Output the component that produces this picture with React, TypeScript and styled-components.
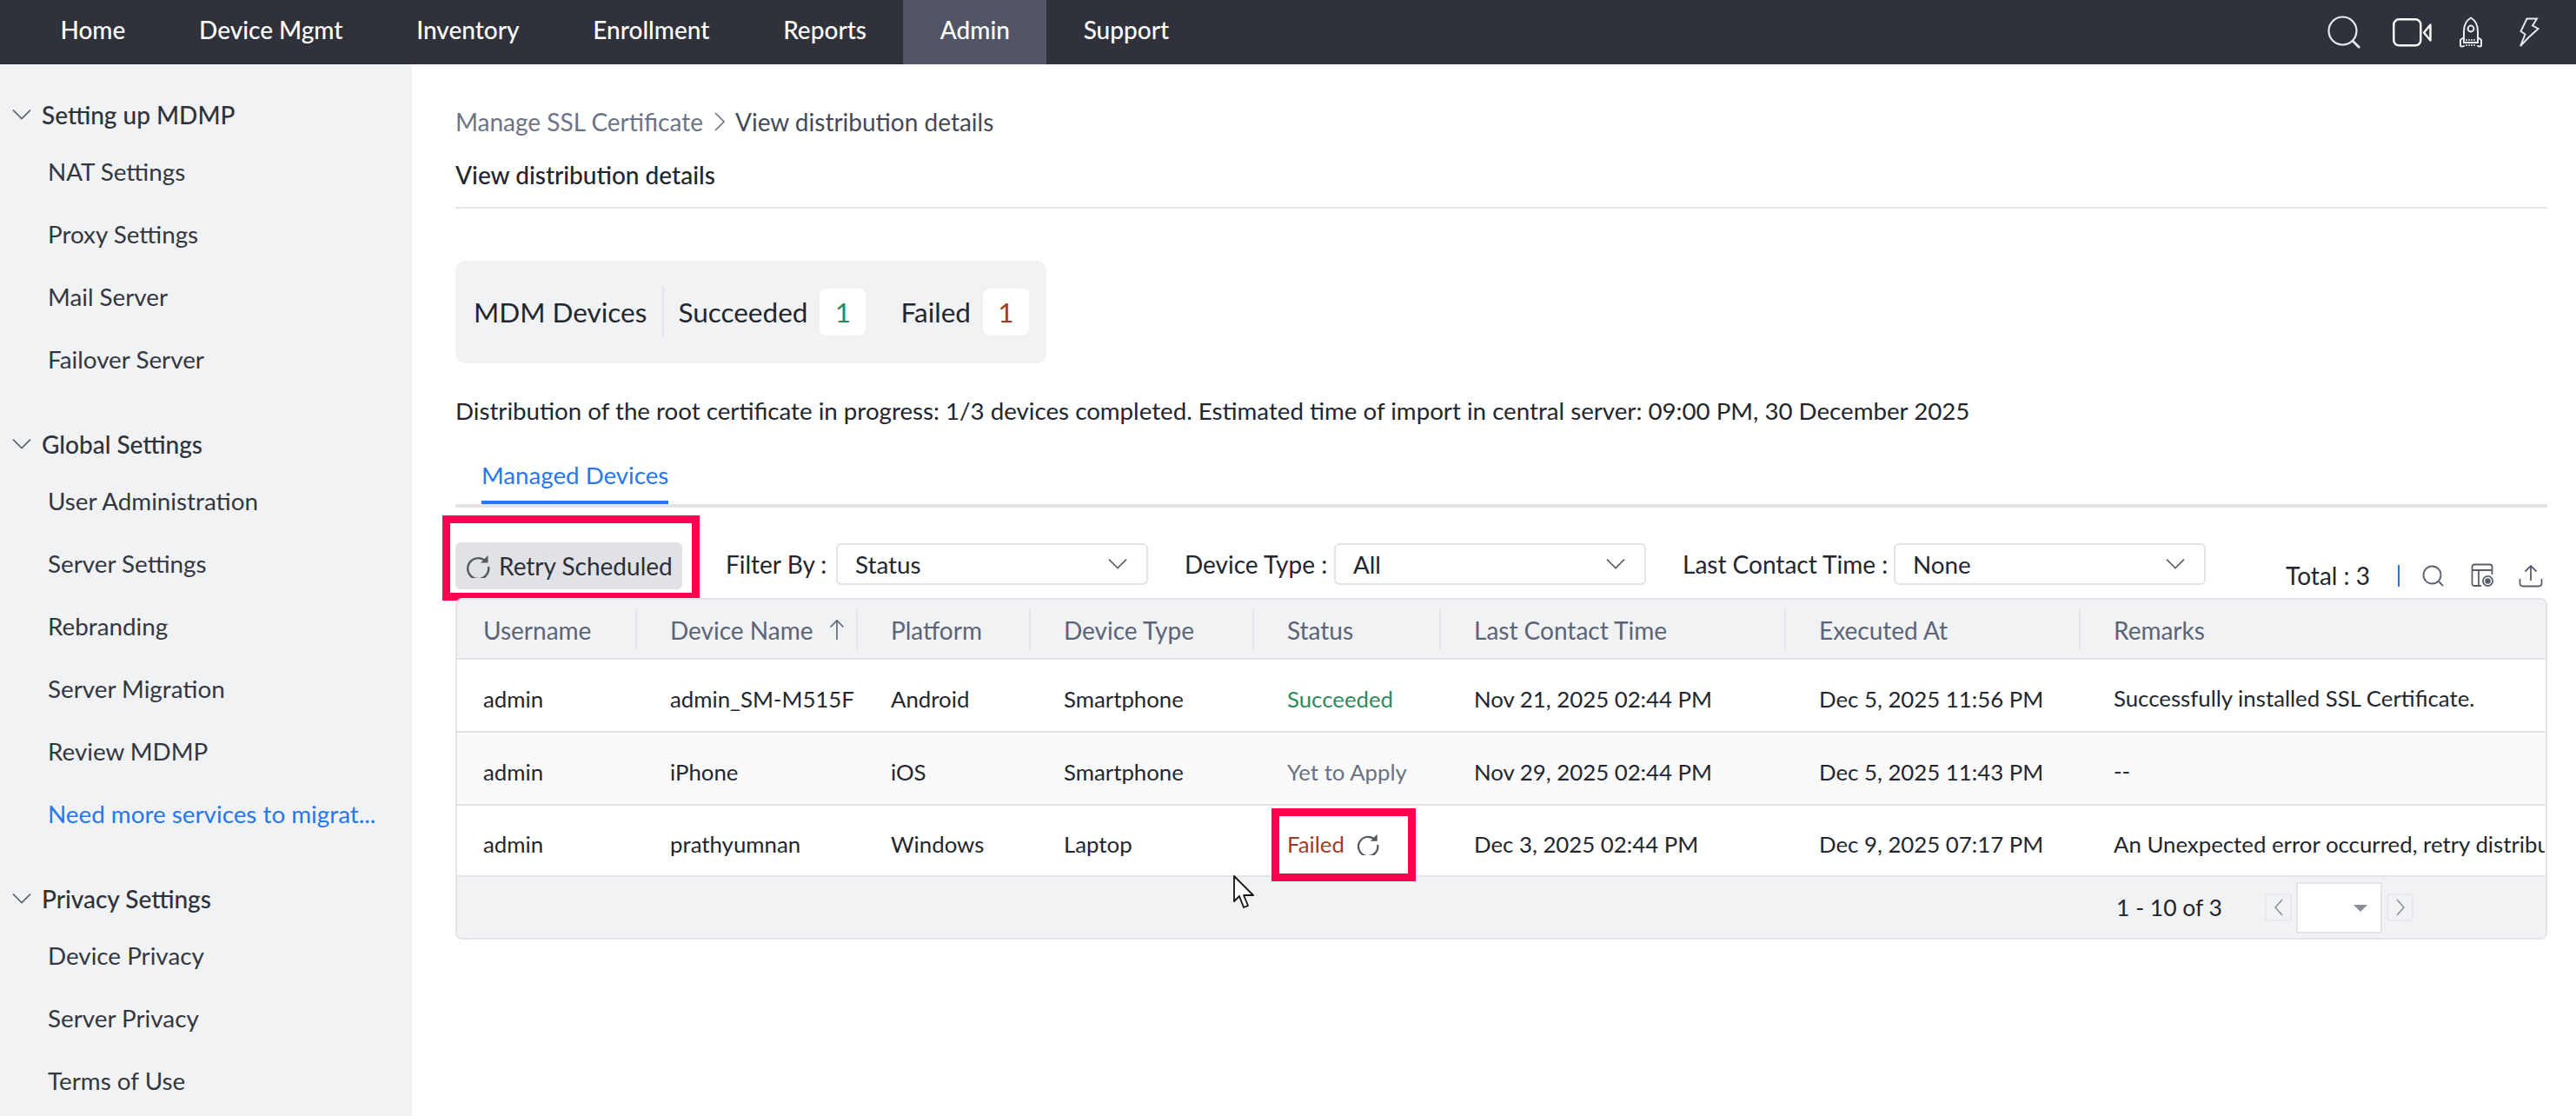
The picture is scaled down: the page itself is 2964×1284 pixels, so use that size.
import React from "react";
import styled, { createGlobalStyle } from "styled-components";

const Global = createGlobalStyle`
  html, body { margin: 0; padding: 0; background: #fff; }
  body { font-family: Lato, "Noto Sans", sans-serif; color: #24262e; }
  * { box-sizing: border-box; }
`;

const Page = styled.div`
  width: 2964px;
  height: 1284px;
  display: flex;
  flex-direction: column;
  overflow: hidden;
`;

const TopBar = styled.header`
  height: 74px;
  flex: none;
  background: #2f323a;
  display: flex;
  align-items: stretch;
  padding-left: 27px;
`;

const NavItem = styled.div<{ $active?: boolean }>`
  display: flex;
  align-items: center;
  padding: 0 42.4px 6px;
  color: #fff;
  font-size: 28px;
  font-weight: 500;
  background: ${(p) => (p.$active ? "#525566" : "transparent")};
`;

const NavIcons = styled.div`
  margin-left: auto;
  display: flex;
  align-items: center;
  padding-right: 42px;
  color: #fff;
  svg { display: block; }
`;

const NavIconSlot = styled.div<{ $w: number; $after: number }>`
  width: ${(p) => p.$w}px;
  margin-right: ${(p) => p.$after}px;
  display: flex;
  justify-content: center;
`;

const Body = styled.div`
  flex: 1;
  display: flex;
  min-height: 0;
`;

const Sidebar = styled.aside`
  width: 474px;
  flex: none;
  background: #f1f2f4;
  padding-top: 29px;
`;

const Group = styled.div`
  margin-bottom: 33px;
`;

const GroupHead = styled.div`
  height: 58px;
  display: flex;
  align-items: center;
  padding-left: 14px;
  gap: 12px;
  font-size: 28px;
  font-weight: 500;
  color: #2f323a;
`;

const SideItem = styled.div<{ $link?: boolean }>`
  height: 72px;
  display: flex;
  align-items: center;
  padding-left: 55px;
  font-size: 27.8px;
  color: ${(p) => (p.$link ? "#2777f0" : "#34373f")};
`;

const Main = styled.main`
  flex: 1;
  min-width: 0;
  padding: 46px 33px 0 50px;
`;

const Crumbs = styled.div`
  height: 40px;
  display: flex;
  align-items: center;
  gap: 12px;
  font-size: 28px;
`;

const CrumbLink = styled.span`
  color: #6c7486;
`;

const CrumbNow = styled.span`
  color: #444a57;
`;

const PageTitle = styled.div`
  margin-top: 22px;
  height: 58px;
  padding-bottom: 16px;
  line-height: 38px;
  border-bottom: 2px solid #e3e4e8;
  font-size: 28px;
  font-weight: 500;
  color: #24262e;
`;

const StatsCard = styled.div`
  margin-top: 60px;
  width: 680px;
  height: 118px;
  border-radius: 12px;
  background: #f1f2f4;
  display: flex;
  align-items: center;
  padding-left: 21px;
  font-size: 31.5px;
  color: #24262e;
`;

const StatsTitle = styled.div`
  padding-right: 18px;
  height: 58px;
  display: flex;
  align-items: center;
  border-right: 2px solid #e3e4e8;
  margin-right: 16px;
`;

const StatLabel = styled.div`
  margin-right: 14px;
`;

const StatCount = styled.div<{ $color: string; $after?: number }>`
  width: 53px;
  height: 54px;
  border-radius: 8px;
  background: #fff;
  display: flex;
  align-items: center;
  justify-content: center;
  color: ${(p) => p.$color};
  margin-right: ${(p) => p.$after || 0}px;
`;

const InfoLine = styled.div`
  margin-top: 35px;
  line-height: 40px;
  font-size: 27.7px;
  color: #24262e;
  white-space: nowrap;
`;

const TabBar = styled.div`
  margin-top: 27px;
  padding-left: 30px;
  border-bottom: 4px solid #e3e4e8;
  height: 64px;
`;

const Tab = styled.div`
  display: inline-block;
  height: 60px;
  padding-top: 7px;
  line-height: 40px;
  font-size: 27.7px;
  color: #2777f0;
  border-bottom: 4px solid #2777f0;
`;

const Toolbar = styled.div`
  margin-top: 40px;
  margin-bottom: 10px;
  height: 54px;
  display: flex;
  align-items: flex-start;
`;

const RetryWrap = styled.div`
  position: relative;
  margin-right: 50px;
`;

const RetryButton = styled.div`
  width: 261px;
  height: 54px;
  border-radius: 6px;
  background: #e1e2e6;
  display: flex;
  align-items: center;
  padding-left: 12px;
  gap: 10px;
  font-size: 28px;
  color: #2b2f3a;
  white-space: nowrap;
`;

const RedBox = styled.div<{ $t: number; $l: number; $w: number; $h: number }>`
  position: absolute;
  top: ${(p) => p.$t}px;
  left: ${(p) => p.$l}px;
  width: ${(p) => p.$w}px;
  height: ${(p) => p.$h}px;
  border: 9px solid #ff0050;
  pointer-events: none;
`;

const Filter = styled.div`
  display: flex;
  align-items: center;
  height: 48px;
  margin-top: 1px;
  margin-right: 42px;
  &:last-of-type { margin-right: 0; }
`;

const FilterLabel = styled.div<{ $w: number }>`
  width: ${(p) => p.$w}px;
  font-size: 28px;
  color: #24262e;
  white-space: nowrap;
`;

const Select = styled.div`
  width: 359px;
  height: 48px;
  border: 2px solid #e3e4e8;
  border-radius: 6px;
  background: #fff;
  display: flex;
  align-items: center;
  justify-content: space-between;
  padding: 0 22px 0 20px;
  font-size: 27.8px;
  color: #24262e;
`;

const Totals = styled.div`
  margin-left: auto;
  margin-top: 23px;
  margin-right: 5px;
  height: 30px;
  display: flex;
  align-items: center;
  font-size: 28px;
  color: #24262e;
`;

const Divider = styled.div`
  width: 2px;
  height: 25px;
  background: #2777f0;
  margin: 0 26px 0 32px;
`;

const ToolIcon = styled.div<{ $after?: number }>`
  margin-right: ${(p) => p.$after || 0}px;
  color: #5a5f6b;
  display: flex;
  svg { display: block; }
`;

const TableFrame = styled.div`
  position: relative;
  border: 2px solid #e3e4e8;
  border-radius: 8px;
  height: 393px;
  background: #fff;
`;

const COLUMNS = "207px 254px 199px 257px 215px 397px 339px 534px";

const HeadRow = styled.div`
  display: grid;
  grid-template-columns: ${COLUMNS};
  height: 69px;
  align-items: center;
  background: #f1f2f4;
  border-bottom: 2px solid #e3e4e8;
  border-radius: 6px 6px 0 0;
`;

const HeadCell = styled.div<{ $first?: boolean; $last?: boolean }>`
  height: 46px;
  display: flex;
  align-items: center;
  gap: 18px;
  padding-top: 2px;
  padding-left: ${(p) => (p.$first ? 30 : 38)}px;
  border-right: ${(p) => (p.$last ? "none" : "2px solid #e3e4e8")};
  font-size: 28px;
  color: #5c6477;
  white-space: nowrap;
`;

const Row = styled.div<{ $h: number; $alt?: boolean }>`
  display: grid;
  grid-template-columns: ${COLUMNS};
  height: ${(p) => p.$h}px;
  align-items: center;
  background: ${(p) => (p.$alt ? "#fafafa" : "#fff")};
  border-bottom: 2px solid #e3e4e8;
`;

const Cell = styled.div<{ $first?: boolean; $color?: string }>`
  position: relative;
  padding-left: ${(p) => (p.$first ? 30 : 38)}px;
  padding-top: 7px;
  height: 100%;
  display: flex;
  align-items: center;
  gap: 14px;
  font-size: 25.8px;
  color: ${(p) => p.$color || "#24262e"};
  white-space: nowrap;
`;

const RemarkCell = styled(Cell)`
  display: block;
  padding-top: 0;
  line-height: 88px;
  overflow: hidden;
`;

const Footer = styled.div`
  height: 70px;
  background: #f1f2f4;
  border-radius: 0 0 6px 6px;
  display: flex;
  align-items: center;
  justify-content: flex-end;
  padding-right: 152px;
  font-size: 26.5px;
  color: #24262e;
`;

const PageRange = styled.div`
  margin-right: 49px;
`;

const PageBtn = styled.div`
  width: 31px;
  height: 32px;
  border: 2px solid #e8e9ec;
  border-radius: 4px;
  display: flex;
  align-items: center;
  justify-content: center;
  color: #8d919b;
`;

const PageSelect = styled.div`
  width: 99px;
  height: 59px;
  margin: 0 5px;
  background: #fff;
  border: 2px solid #e3e4e8;
  position: relative;
`;

const Caret = styled.div`
  position: absolute;
  right: 15px;
  top: 24px;
  width: 0;
  height: 0;
  border-left: 8px solid transparent;
  border-right: 8px solid transparent;
  border-top: 8px solid #8a8d95;
`;

const Pointer = styled.svg`
  position: absolute;
  left: 892px;
  top: 317px;
  pointer-events: none;
`;

const Chevron = ({ size = 22, color = "#5a5f6b" }: { size?: number; color?: string }) => (
  <svg width={size} height={size * 0.6} viewBox="0 0 22 13" fill="none" stroke={color} strokeWidth="1.6">
    <path d="M1 1.5 L11 11.5 L21 1.5" />
  </svg>
);

const Refresh = ({ size = 28, color = "#55585f" }: { size?: number; color?: string }) => (
  <svg width={size} height={size} viewBox="0 0 28 28" fill="none">
    <path d="M22.5 8.5 A12 12 0 1 0 26 15" stroke={color} strokeWidth="2.4" />
    <path d="M25.5 2 V10.5 H17 Z" fill={color} />
  </svg>
);

const SearchLarge = () => (
  <svg width="38" height="38" viewBox="0 0 38 38" fill="none" stroke="#e9eaee" strokeWidth="2.2">
    <circle cx="17.5" cy="17.5" r="16" />
    <path d="M29 29 L37 37" strokeWidth="2.6" />
  </svg>
);

const Video = () => (
  <svg width="45" height="33" viewBox="0 0 45 33" fill="none" stroke="#fff" strokeWidth="2.4" strokeLinejoin="round">
    <rect x="1.3" y="1.3" width="31" height="30" rx="6" />
    <path d="M36 16.5 L43.5 7.5 V25.5 Z" />
  </svg>
);

const Rocket = () => (
  <svg width="28" height="36" viewBox="0 0 28 36" fill="none" stroke="#e9eaee" strokeWidth="2">
    <path d="M14 1.5 C8 5 6 11 6 17 V30 H22 V17 C22 11 20 5 14 1.5 Z" />
    <circle cx="14" cy="14" r="3.4" />
    <path d="M6 24 L2 27 V33 C2 35 6 35 6 33 M22 24 L26 27 V33 C26 35 22 35 22 33" />
    <path d="M8 27 H20 M8 30 H20 M8 33 H20" strokeWidth="1.6" strokeDasharray="2 1" />
  </svg>
);

const Bolt = () => (
  <svg width="23" height="34" viewBox="0 0 23 34" fill="none" stroke="#e9eaee" strokeWidth="1.9" strokeLinejoin="miter">
    <path d="M8.5 1.5 H20 L15 9.5 L21.5 13 L10 23.5 L1 33 L6.5 19.5 L1.5 16 Z" />
  </svg>
);

const SearchSmall = () => (
  <svg width="25" height="25" viewBox="0 0 25 25" fill="none" stroke="currentColor" strokeWidth="1.8">
    <circle cx="11.5" cy="11.5" r="10" />
    <path d="M19 19 L24 24" />
  </svg>
);

const ColumnsIcon = () => (
  <svg width="27" height="28" viewBox="0 0 27 28" fill="none" stroke="currentColor" strokeWidth="1.8">
    <path d="M12 26 H4 C2.5 26 1.5 25 1.5 23.5 V4 C1.5 2.5 2.5 1.5 4 1.5 H22 C23.5 1.5 24.5 2.5 24.5 4 V13" />
    <path d="M1.5 8 H24.5 M9 8 V26" />
    <circle cx="19.5" cy="20.5" r="5.6" />
    <circle cx="19.5" cy="20.5" r="2.4" fill="currentColor" />
  </svg>
);

const UploadIcon = () => (
  <svg width="28" height="27" viewBox="0 0 28 27" fill="none" stroke="currentColor" strokeWidth="1.8">
    <path d="M14 19 V2 M7.5 8.5 L14 2 L20.5 8.5" />
    <path d="M1.5 17 V22 C1.5 24 3 25.5 5 25.5 H23 C25 25.5 26.5 24 26.5 22 V17" />
  </svg>
);

const SortUp = () => (
  <svg width="18" height="25" viewBox="0 0 18 25" fill="none" stroke="#5c6477" strokeWidth="1.6">
    <path d="M9 24 V2 M1.5 9.5 L9 2 L16.5 9.5" />
  </svg>
);

const menu: { head: string; items: { label: string; link?: boolean }[] }[] = [
  { head: "Setting up MDMP", items: [{ label: "NAT Settings" }, { label: "Proxy Settings" }, { label: "Mail Server" }, { label: "Failover Server" }] },
  {
    head: "Global Settings",
    items: [
      { label: "User Administration" },
      { label: "Server Settings" },
      { label: "Rebranding" },
      { label: "Server Migration" },
      { label: "Review MDMP" },
      { label: "Need more services to migrat...", link: true },
    ],
  },
  { head: "Privacy Settings", items: [{ label: "Device Privacy" }, { label: "Server Privacy" }, { label: "Terms of Use" }] },
];

const tabs = ["Home", "Device Mgmt", "Inventory", "Enrollment", "Reports", "Admin", "Support"];
const headers = ["Username", "Device Name", "Platform", "Device Type", "Status", "Last Contact Time", "Executed At", "Remarks"];

export default function App() {
  return (
    <Page>
      <Global />
      <TopBar>
        {tabs.map((t) => (
          <NavItem key={t} $active={t === "Admin"}>{t}</NavItem>
        ))}
        <NavIcons>
          <NavIconSlot $w={38} $after={37}><SearchLarge /></NavIconSlot>
          <NavIconSlot $w={45} $after={31}><Video /></NavIconSlot>
          <NavIconSlot $w={28} $after={42}><Rocket /></NavIconSlot>
          <NavIconSlot $w={23} $after={0}><Bolt /></NavIconSlot>
        </NavIcons>
      </TopBar>
      <Body>
        <Sidebar>
          {menu.map((g) => (
            <Group key={g.head}>
              <GroupHead>
                <Chevron />
                {g.head}
              </GroupHead>
              {g.items.map((i) => (
                <SideItem key={i.label} $link={i.link}>{i.label}</SideItem>
              ))}
            </Group>
          ))}
        </Sidebar>
        <Main>
          <Crumbs>
            <CrumbLink>Manage SSL Certificate</CrumbLink>
            <svg width="13" height="22" viewBox="0 0 13 22" fill="none" stroke="#6c7486" strokeWidth="1.6">
              <path d="M2 1 L12 11 L2 21" />
            </svg>
            <CrumbNow>View distribution details</CrumbNow>
          </Crumbs>
          <PageTitle>View distribution details</PageTitle>
          <StatsCard>
            <StatsTitle>MDM Devices</StatsTitle>
            <StatLabel>Succeeded</StatLabel>
            <StatCount $color="#2d8a5b" $after={40}>1</StatCount>
            <StatLabel>Failed</StatLabel>
            <StatCount $color="#a33a1f">1</StatCount>
          </StatsCard>
          <InfoLine>
            Distribution of the root certificate in progress: 1/3 devices completed. Estimated time of import in central server: 09:00 PM, 30 December 2025
          </InfoLine>
          <TabBar>
            <Tab>Managed Devices</Tab>
          </TabBar>
          <Toolbar>
            <RetryWrap>
              <RetryButton>
                <Refresh />
                Retry Scheduled
              </RetryButton>
              <RedBox $t={-31} $l={-15} $w={296} $h={98} />
            </RetryWrap>
            <Filter>
              <FilterLabel $w={127}>Filter By :</FilterLabel>
              <Select>Status<Chevron /></Select>
            </Filter>
            <Filter>
              <FilterLabel $w={172}>Device Type :</FilterLabel>
              <Select>All<Chevron /></Select>
            </Filter>
            <Filter>
              <FilterLabel $w={243}>Last Contact Time :</FilterLabel>
              <Select>None<Chevron /></Select>
            </Filter>
            <Totals>
              Total : 3
              <Divider />
              <ToolIcon $after={31}><SearchSmall /></ToolIcon>
              <ToolIcon $after={28}><ColumnsIcon /></ToolIcon>
              <ToolIcon><UploadIcon /></ToolIcon>
            </Totals>
          </Toolbar>
          <TableFrame>
            <HeadRow>
              {headers.map((h, i) => (
                <HeadCell key={h} $first={i === 0} $last={i === headers.length - 1}>
                  {h}
                  {h === "Device Name" && <SortUp />}
                </HeadCell>
              ))}
            </HeadRow>
            <Row $h={84}>
              <Cell $first>admin</Cell>
              <Cell>admin_SM-M515F</Cell>
              <Cell>Android</Cell>
              <Cell>Smartphone</Cell>
              <Cell $color="#2d8a5b">Succeeded</Cell>
              <Cell>Nov 21, 2025 02:44 PM</Cell>
              <Cell>Dec 5, 2025 11:56 PM</Cell>
              <RemarkCell>Successfully installed SSL Certificate.</RemarkCell>
            </Row>
            <Row $h={84} $alt>
              <Cell $first>admin</Cell>
              <Cell>iPhone</Cell>
              <Cell>iOS</Cell>
              <Cell>Smartphone</Cell>
              <Cell $color="#6b7280">Yet to Apply</Cell>
              <Cell>Nov 29, 2025 02:44 PM</Cell>
              <Cell>Dec 5, 2025 11:43 PM</Cell>
              <RemarkCell>--</RemarkCell>
            </Row>
            <Row $h={82}>
              <Cell $first>admin</Cell>
              <Cell>prathyumnan</Cell>
              <Cell>Windows</Cell>
              <Cell>Laptop</Cell>
              <Cell $color="#a33a1f">
                Failed
                <Refresh size={26} />
                <RedBox $t={3} $l={20} $w={166} $h={84} />
              </Cell>
              <Cell>Dec 3, 2025 02:44 PM</Cell>
              <Cell>Dec 9, 2025 07:17 PM</Cell>
              <RemarkCell>An Unexpected error occurred, retry distribution</RemarkCell>
            </Row>
            <Footer>
              <PageRange>1 - 10 of 3</PageRange>
              <PageBtn>
                <svg width="10" height="20" viewBox="0 0 10 20" fill="none" stroke="currentColor" strokeWidth="1.6"><path d="M9 1 L1 10 L9 19" /></svg>
              </PageBtn>
              <PageSelect><Caret /></PageSelect>
              <PageBtn>
                <svg width="10" height="20" viewBox="0 0 10 20" fill="none" stroke="currentColor" strokeWidth="1.6"><path d="M1 1 L9 10 L1 19" /></svg>
              </PageBtn>
            </Footer>
            <Pointer width="26" height="40" viewBox="0 0 26 40">
              <path d="M2 1 L2 30 L8 24 L13 37 L18 35 L13 23 L24 23 Z" fill="#fff" stroke="#111" strokeWidth="1.8" strokeLinejoin="round" />
            </Pointer>
          </TableFrame>
        </Main>
      </Body>
    </Page>
  );
}
